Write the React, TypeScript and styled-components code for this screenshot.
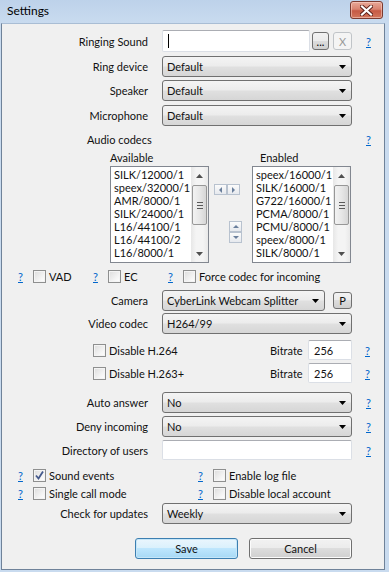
import styled, { createGlobalStyle } from 'styled-components';

const GlobalStyle = createGlobalStyle`
	html, body {
		margin: 0;
		padding: 0;
		background: #c8daee;
	}
	body {
		font-family: 'Segoe UI', Lato, 'Noto Sans', sans-serif;
		font-size: 11px;
		color: #111;
	}
`;

type ArrowDir = 'up' | 'down' | 'left' | 'right';

const Arrow = ({ dir, color = '#000', w = 7, h = 4 }: { dir: ArrowDir; color?: string; w?: number; h?: number }) => {
	const horizontal = dir === 'left' || dir === 'right';
	const vw = horizontal ? h : w;
	const vh = horizontal ? w : h;
	const points = {
		down: `0,0 ${w},0 ${w / 2},${h}`,
		up: `0,${h} ${w},${h} ${w / 2},0`,
		right: `0,0 ${h},${w / 2} 0,${w}`,
		left: `${h},0 0,${w / 2} ${h},${w}`,
	}[dir];
	return (
		<svg width={vw} height={vh} viewBox={`0 0 ${vw} ${vh}`}>
			<polygon points={points} fill={color} />
		</svg>
	);
};

const Help = () => <HelpLink>?</HelpLink>;

const Check = ({ checked, label }: { checked?: boolean; label: string }) => (
	<CheckWrap>
		<CheckBox>
			{checked && (
				<svg width='11' height='11' viewBox='0 0 11 11'>
					<polyline points='2,5.5 4.5,8.5 9,1.5' fill='none' stroke='#44598c' strokeWidth='1.8' />
				</svg>
			)}
		</CheckBox>
		<span>{label}</span>
	</CheckWrap>
);

const Combo = ({ value, width }: { value: string; width?: number }) => (
	<ComboBox $width={width}>
		<span>{value}</span>
		<Arrow dir='down' />
	</ComboBox>
);

const ScrollBar = () => (
	<ScrollTrack>
		<ScrollArrow>
			<Arrow dir='up' color='#505050' />
		</ScrollArrow>
		<ScrollThumb>
			<Grip />
			<Grip />
			<Grip />
		</ScrollThumb>
		<ScrollSpacer />
		<ScrollArrow>
			<Arrow dir='down' color='#505050' />
		</ScrollArrow>
	</ScrollTrack>
);

const CodecList = ({ items }: { items: string[] }) => (
	<ListBox>
		<ListItems>
			{items.map(item => (
				<ListItem key={item}>{item}</ListItem>
			))}
		</ListItems>
		<ScrollBar />
	</ListBox>
);

const available = [
	'SILK/12000/1',
	'speex/32000/1',
	'AMR/8000/1',
	'SILK/24000/1',
	'L16/44100/1',
	'L16/44100/2',
	'L16/8000/1',
];

const enabled = [
	'speex/16000/1',
	'SILK/16000/1',
	'G722/16000/1',
	'PCMA/8000/1',
	'PCMU/8000/1',
	'speex/8000/1',
	'SILK/8000/1',
];

const App = () => {
	return (
		<>
			<GlobalStyle />
			<Window>
				<TitleBar>
					<Title>Settings</Title>
					<CloseButton>
						<svg width='13' height='11' viewBox='0 0 13 11'>
							<path d='M2 1.5 L11 9.5 M11 1.5 L2 9.5' stroke='#5b1f18' strokeWidth='4' strokeLinecap='square' />
							<path d='M2 1.5 L11 9.5 M11 1.5 L2 9.5' stroke='#fff' strokeWidth='2.2' strokeLinecap='square' />
						</svg>
					</CloseButton>
				</TitleBar>

				<Client>
					{/* Sound devices */}
					<Row $mt={6} $h={22}>
						<FieldLabel>Ringing Sound</FieldLabel>
						<ControlGroup>
							<TextInput $width={148} $h={22}>
								<Caret />
							</TextInput>
							<SmallButton $ml={2}>...</SmallButton>
							<SmallButton $disabled>X</SmallButton>
						</ControlGroup>
						<Help />
					</Row>
					<Row $mt={4} $h={21}>
						<FieldLabel>Ring device</FieldLabel>
						<Combo value='Default' />
					</Row>
					<Row $mt={3} $h={21}>
						<FieldLabel>Speaker</FieldLabel>
						<Combo value='Default' />
					</Row>
					<Row $mt={4} $h={21}>
						<FieldLabel>Microphone</FieldLabel>
						<Combo value='Default' />
					</Row>

					{/* Audio codecs */}
					<Row $mt={5} $h={16}>
						<SectionLabel>Audio codecs</SectionLabel>
						<span />
						<Help />
					</Row>
					<CodecHeader>
						<span>Available</span>
						<span />
						<EnabledHeader>Enabled</EnabledHeader>
					</CodecHeader>
					<CodecGrid>
						<CodecList items={available} />
						<MidColumn>
							<ButtonPair>
								<MiniButton>
									<Arrow dir='left' color='#6a7f9c' w={6} h={3} />
								</MiniButton>
								<MiniButton>
									<Arrow dir='right' color='#6a7f9c' w={6} h={3} />
								</MiniButton>
							</ButtonPair>
							<ButtonStack>
								<MiniButton>
									<Arrow dir='up' color='#6a7f9c' w={6} h={3} />
								</MiniButton>
								<MiniButton>
									<Arrow dir='down' color='#6a7f9c' w={6} h={3} />
								</MiniButton>
							</ButtonStack>
						</MidColumn>
						<CodecList items={enabled} />
					</CodecGrid>

					<CheckRow $mt={5} $cols='75px 75px 1fr'>
						<CheckItem>
							<Help />
							<Check label='VAD' />
						</CheckItem>
						<CheckItem>
							<Help />
							<Check label='EC' />
						</CheckItem>
						<CheckItem>
							<Help />
							<Check label='Force codec for incoming' />
						</CheckItem>
					</CheckRow>

					{/* Video */}
					<Row $mt={6} $h={21}>
						<FieldLabel>Camera</FieldLabel>
						<ControlGroup>
							<Combo value='CyberLink Webcam Splitter' width={163} />
							<PButton>P</PButton>
						</ControlGroup>
					</Row>
					<Row $mt={2} $h={21}>
						<FieldLabel>Video codec</FieldLabel>
						<Combo value='H264/99' />
					</Row>
					<BitrateRow $mt={6}>
						<Check label='Disable H.264' />
						<span>Bitrate</span>
						<TextInput $width={44} $h={20}>256</TextInput>
						<Help />
					</BitrateRow>
					<BitrateRow $mt={3}>
						<Check label='Disable H.263+' />
						<span>Bitrate</span>
						<TextInput $width={44} $h={20}>256</TextInput>
						<Help />
					</BitrateRow>

					{/* Calls */}
					<Row $mt={9} $h={21}>
						<FieldLabel>Auto answer</FieldLabel>
						<Combo value='No' />
						<Help />
					</Row>
					<Row $mt={3} $h={21}>
						<FieldLabel>Deny incoming</FieldLabel>
						<Combo value='No' />
						<Help />
					</Row>
					<Row $mt={3} $h={20}>
						<FieldLabel>Directory of users</FieldLabel>
						<TextInput $width={190} $h={20} />
						<Help />
					</Row>

					<CheckRow $mt={7} $cols='180px 1fr'>
						<CheckItem>
							<Help />
							<Check checked label='Sound events' />
						</CheckItem>
						<CheckItem>
							<Help />
							<Check label='Enable log file' />
						</CheckItem>
					</CheckRow>
					<CheckRow $mt={2} $cols='180px 1fr'>
						<CheckItem>
							<Help />
							<Check label='Single call mode' />
						</CheckItem>
						<CheckItem>
							<Help />
							<Check label='Disable local account' />
						</CheckItem>
					</CheckRow>

					<Row $mt={2} $h={21}>
						<FieldLabel>Check for updates</FieldLabel>
						<Combo value='Weekly' />
					</Row>

					<ButtonBar>
						<DialogButton $primary>Save</DialogButton>
						<DialogButton>Cancel</DialogButton>
					</ButtonBar>
				</Client>
			</Window>
		</>
	);
};

// Styled Components
const Window = styled.div`
	width: 389px;
	height: 572px;
	display: flex;
	flex-direction: column;
	background: #c9dbef;
	overflow: hidden;
`;

const TitleBar = styled.div`
	height: 23px;
	flex-shrink: 0;
	display: flex;
	align-items: center;
	justify-content: space-between;
	padding: 0 6px 0 7px;
	background: linear-gradient(#bdd2ea, #c9dbef);
`;

const Title = styled.div`
	font-size: 12px;
	margin-top: -2px;
	color: #000;
`;

const CloseButton = styled.div`
	width: 31px;
	height: 16px;
	margin-top: -3px;
	display: flex;
	align-items: center;
	justify-content: center;
	border: 1px solid #7b3a30;
	border-radius: 3px;
	background: linear-gradient(#e8a898 0%, #d98370 45%, #c65a45 55%, #d2765c 100%);
	box-shadow: inset 0 0 0 1px rgba(255, 220, 210, 0.5);
`;

const Client = styled.div`
	flex: 1;
	margin: 0 4px 2px 1px;
	border: 1px solid #6f8299;
	border-top-color: #a9bdd4;
	background: #f0f0f0;
	display: flex;
	flex-direction: column;
`;

const Row = styled.div<{ $mt: number; $h: number }>`
	display: grid;
	grid-template-columns: 146px 190px auto;
	column-gap: 14px;
	align-items: center;
	height: ${props => props.$h}px;
	margin-top: ${props => props.$mt}px;
`;

const FieldLabel = styled.span`
	text-align: right;
	white-space: nowrap;
`;

const SectionLabel = styled.span`
	padding-left: 85px;
	white-space: nowrap;
`;

const HelpLink = styled.span`
	display: inline-block;
	width: 15px;
	color: #0066cc;
	text-decoration: underline;
	cursor: pointer;
`;

const ControlGroup = styled.div`
	display: flex;
	align-items: center;
`;

const TextInput = styled.div<{ $width: number; $h: number }>`
	box-sizing: border-box;
	width: ${props => props.$width}px;
	height: ${props => props.$h}px;
	padding: 0 5px;
	display: flex;
	align-items: center;
	background: #fff;
	border: 1px solid #dbdfe6;
	border-top-color: #abadb3;
	border-radius: 2px;
	line-height: 1;
`;

const Caret = styled.span`
	width: 1px;
	height: 14px;
	background: #000;
`;

const SmallButton = styled.div<{ $ml?: number; $disabled?: boolean }>`
	box-sizing: border-box;
	width: ${props => (props.$disabled ? 19 : 17)}px;
	height: 18px;
	margin-left: ${props => (props.$ml ? `${props.$ml}px` : 'auto')};
	display: flex;
	align-items: center;
	justify-content: center;
	border-radius: 3px;
	font-size: 11px;
	border: 1px solid ${props => (props.$disabled ? '#c0c4c8' : '#707070')};
	color: ${props => (props.$disabled ? '#9a9a9a' : '#000')};
	background: ${props =>
		props.$disabled
			? '#f4f4f4'
			: 'linear-gradient(#f2f2f2 0%, #ebebeb 50%, #dddddd 50%, #cfcfcf 100%)'};
`;

const ComboBox = styled.div<{ $width?: number }>`
	box-sizing: border-box;
	width: ${props => props.$width ?? 190}px;
	height: 21px;
	padding: 0 5px 0 4px;
	display: flex;
	align-items: center;
	justify-content: space-between;
	border: 1px solid #707070;
	border-radius: 3px;
	background: linear-gradient(#f4f4f4 0%, #ececec 48%, #e0e0e0 52%, #d6d6d6 100%);
	white-space: nowrap;
`;

const PButton = styled.div`
	box-sizing: border-box;
	width: 19px;
	height: 17px;
	margin-left: auto;
	display: flex;
	align-items: center;
	justify-content: center;
	border: 1px solid #707070;
	border-radius: 3px;
	background: linear-gradient(#f2f2f2 0%, #ebebeb 50%, #dddddd 50%, #cfcfcf 100%);
`;

const CodecHeader = styled.div`
	display: grid;
	grid-template-columns: 99px 43px 99px;
	align-items: center;
	height: 16px;
	margin: 2px 0 0 108px;
`;

const CodecGrid = styled.div`
	display: grid;
	grid-template-columns: 99px 43px 99px;
	height: 97px;
	margin: 1px 0 0 108px;
`;

const EnabledHeader = styled.span`
	padding-left: 8px;
`;

const ListBox = styled.div`
	box-sizing: border-box;
	height: 97px;
	display: flex;
	background: #fff;
	border: 1px solid #828790;
	overflow: hidden;
`;

const ListItems = styled.div`
	flex: 1;
	min-width: 0;
	padding: 1px 0 0 3px;
	overflow: hidden;
`;

const ListItem = styled.div`
	height: 13px;
	line-height: 13px;
	white-space: nowrap;
	font-size: 11px;
`;

const ScrollTrack = styled.div`
	width: 17px;
	flex-shrink: 0;
	display: flex;
	flex-direction: column;
	align-items: center;
	background: linear-gradient(90deg, #e7e7e7, #f4f4f4 30%, #f4f4f4 70%, #e9e9e9);
`;

const ScrollArrow = styled.div`
	height: 17px;
	width: 17px;
	display: flex;
	align-items: center;
	justify-content: center;
`;

const ScrollThumb = styled.div`
	box-sizing: border-box;
	width: 15px;
	height: 40px;
	margin-top: 1px;
	display: flex;
	flex-direction: column;
	align-items: center;
	justify-content: center;
	gap: 2px;
	border: 1px solid #979797;
	border-radius: 2px;
	background: linear-gradient(90deg, #f2f2f2, #e7e7e7 50%, #d6d6d6);
`;

const Grip = styled.div`
	width: 6px;
	height: 1px;
	background: #5a5a5a;
`;

const ScrollSpacer = styled.div`
	flex: 1;
`;

const MidColumn = styled.div`
	display: flex;
	flex-direction: column;
	align-items: flex-start;
	padding-top: 18px;
`;

const ButtonPair = styled.div`
	display: flex;
	margin-left: 5px;
`;

const ButtonStack = styled.div`
	display: flex;
	flex-direction: column;
	margin-left: 20px;
	margin-top: 26px;
`;

const MiniButton = styled.div`
	box-sizing: border-box;
	width: 13px;
	height: 11px;
	display: flex;
	align-items: center;
	justify-content: center;
	border: 1px solid #b8c2cf;
	background: linear-gradient(#fbfbfb, #e6e9ee);
`;

const CheckRow = styled.div<{ $mt: number; $cols: string }>`
	display: grid;
	grid-template-columns: ${props => props.$cols};
	align-items: center;
	height: 16px;
	padding-left: 16px;
	margin-top: ${props => props.$mt}px;
`;

const CheckItem = styled.div`
	display: flex;
	align-items: center;
	white-space: nowrap;
`;

const CheckWrap = styled.label`
	display: flex;
	align-items: center;
	gap: 3px;
	white-space: nowrap;
`;

const CheckBox = styled.span`
	box-sizing: border-box;
	width: 13px;
	height: 13px;
	flex-shrink: 0;
	display: flex;
	align-items: center;
	justify-content: center;
	border: 1px solid #8e8f8f;
	background: linear-gradient(135deg, #dcdcdc, #f6f6f6 70%, #ffffff);
	box-shadow: inset 0 0 0 1px #f4f4f4;
`;

const BitrateRow = styled.div<{ $mt: number }>`
	display: grid;
	grid-template-columns: 177px 38px 44px auto;
	align-items: center;
	height: 20px;
	padding-left: 91px;
	margin-top: ${props => props.$mt}px;

	& > ${HelpLink} {
		margin-left: 13px;
	}
`;

const ButtonBar = styled.div`
	display: flex;
	justify-content: flex-end;
	gap: 11px;
	padding-right: 32px;
	margin-top: 14px;
`;

const DialogButton = styled.div<{ $primary?: boolean }>`
	box-sizing: border-box;
	width: 103px;
	height: 21px;
	display: flex;
	align-items: center;
	justify-content: center;
	border-radius: 3px;
	border: 1px solid ${props => (props.$primary ? '#3c7fb1' : '#707070')};
	background: ${props =>
		props.$primary
			? 'linear-gradient(#eaf6fd 0%, #d9f0fc 50%, #bee6fd 50%, #a7d9f5 100%)'
			: 'linear-gradient(#f2f2f2 0%, #ebebeb 50%, #dddddd 50%, #cfcfcf 100%)'};
	box-shadow: ${props => (props.$primary ? 'inset 0 0 0 1px #c6e6f8' : 'inset 0 0 0 1px #fcfcfc')};
`;

export default App;
